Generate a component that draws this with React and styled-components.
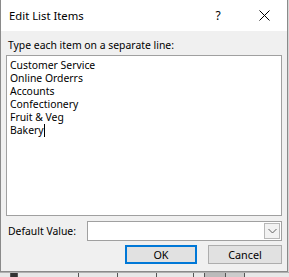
import React from "react";
import styled, { createGlobalStyle } from "styled-components";

const Global = createGlobalStyle`
  html, body { margin: 0; padding: 0; background: #cfcfcf; }
  body { font-family: "Noto Sans", "Open Sans", sans-serif; }
`;

const Page = styled.div`
  width: 289px;
  height: 277px;
  display: flex;
  flex-direction: column;
  overflow: hidden;
  background: #d6d6d6;
`;

const Dialog = styled.div`
  width: 288px;
  height: 272px;
  box-sizing: border-box;
  border: 1px solid #8a8a8a;
  border-top: none;
  background: #f0f0f0;
  display: flex;
  flex-direction: column;
`;

const TitleBar = styled.div`
  height: 31px;
  background: #ffffff;
  display: flex;
  align-items: center;
  padding-left: 8px;
  font-size: 11.3px;
  color: #000;
`;

const Title = styled.div`
  flex: 1;
`;

const TitleButton = styled.div`
  width: 46px;
  height: 31px;
  display: flex;
  align-items: center;
  justify-content: center;
  font-size: 12px;
  color: #000;
`;

const Body = styled.div`
  flex: 1;
  display: flex;
  flex-direction: column;
  padding: 6px 5px 0 5px;
`;

const Label = styled.div`
  font-size: 10.4px;
  line-height: 16px;
  padding-left: 2px;
  color: #000;
`;

const TextArea = styled.div`
  margin-top: 2px;
  height: 161px;
  box-sizing: border-box;
  border: 1px solid #a0a0a0;
  background: #fff;
  padding: 3px 3px;
  font-size: 10.4px;
  line-height: 13px;
  color: #000;
`;

const Line = styled.div`
  height: 13px;
  white-space: nowrap;
`;

const Caret = styled.span`
  display: inline-block;
  width: 1px;
  height: 13px;
  background: #000;
  vertical-align: -3px;
`;

const Row = styled.div`
  display: flex;
  align-items: center;
  margin-top: 5px;
  height: 20px;
`;

const RowLabel = styled.div`
  width: 79px;
  font-size: 10.4px;
  padding-left: 2px;
  color: #000;
`;

const Combo = styled.div`
  flex: 1;
  height: 20px;
  box-sizing: border-box;
  border: 1px solid #a0a0a0;
  background: #fff;
  display: flex;
  justify-content: flex-end;
  align-items: center;
  padding-right: 1px;
`;

const DropButton = styled.div`
  width: 16px;
  height: 16px;
  box-sizing: border-box;
  border: 1px solid #b8b8b8;
  background: #f2f2f2;
  display: flex;
  align-items: center;
  justify-content: center;
`;

const Buttons = styled.div`
  display: flex;
  justify-content: flex-end;
  gap: 11px;
  margin-top: 4px;
`;

const Button = styled.div`
  width: ${(p) => p.$w}px;
  height: 19px;
  box-sizing: border-box;
  border: ${(p) => (p.$default ? "2px solid #0078d7" : "1px solid #adadad")};
  background: #e1e1e1;
  display: flex;
  align-items: center;
  justify-content: center;
  font-size: 10.8px;
  color: #000;
`;

const Strip = styled.div`
  flex: 1;
  background: #e8e8e8;
  border-top: 1px solid #b0b0b0;
  display: flex;
`;

const Cell = styled.div`
  width: ${(p) => p.$w}px;
  border-right: 1px solid #555;
  background: ${(p) => p.$bg || "transparent"};
`;

const items = [
  "Customer Service",
  "Online Orderrs",
  "Accounts",
  "Confectionery",
  "Fruit & Veg",
];

export default function App() {
  return (
    <Page>
      <Global />
      <Dialog>
        <TitleBar>
          <Title>Edit List Items</Title>
          <TitleButton>?</TitleButton>
          <TitleButton>
            <svg width="11" height="11" viewBox="0 0 11 11">
              <path d="M0.5 0.5 L10.5 10.5 M10.5 0.5 L0.5 10.5" stroke="#000" strokeWidth="1" />
            </svg>
          </TitleButton>
        </TitleBar>
        <Body>
          <Label>Type each item on a separate line:</Label>
          <TextArea>
            {items.map((t) => (
              <Line key={t}>{t}</Line>
            ))}
            <Line>
              Bakery<Caret />
            </Line>
          </TextArea>
          <Row>
            <RowLabel>Default Value:</RowLabel>
            <Combo>
              <DropButton>
                <svg width="9" height="6" viewBox="0 0 9 6">
                  <path d="M0.5 1 L4.5 5 L8.5 1" stroke="#606060" strokeWidth="1" fill="none" />
                </svg>
              </DropButton>
            </Combo>
          </Row>
          <Buttons>
            <Button $w={72} $default>OK</Button>
            <Button $w={74}>Cancel</Button>
          </Buttons>
        </Body>
      </Dialog>
      <Strip>
        <Cell $w={10} />
        <Cell $w={6} $bg="#333" />
        <Cell $w={60} />
        <Cell $w={38} />
        <Cell $w={38} />
        <Cell $w={36} />
        <Cell $w={10} />
        <Cell $w={20} $bg="#bbb" />
        <Cell $w={18} $bg="#ccc" />
      </Strip>
    </Page>
  );
}
